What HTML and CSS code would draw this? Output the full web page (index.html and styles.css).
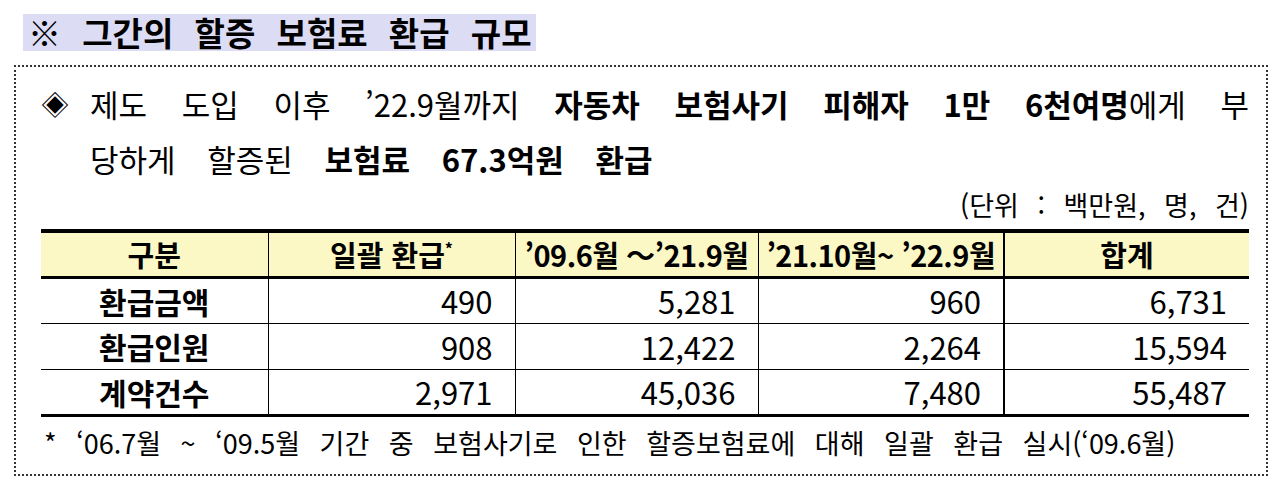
FILE: index.html
```html
<!DOCTYPE html>
<html lang="ko">
<head>
<meta charset="utf-8">
<title>그간의 할증 보험료 환급 규모</title>
<link rel="stylesheet" href="styles.css">
</head>
<body>
<h1 class="title">※ 그간의 할증 보험료 환급 규모</h1>
<section class="box">
  <div class="lead">
    <span class="bullet">◈</span>
    <div class="lead-text">
      <p class="line-first">제도 도입 이후 ’22.9월까지 <b>자동차 보험사기 피해자 1만 6천여명</b>에게 부</p>
      <p class="line">당하게 할증된 <b>보험료 67.3억원 환급</b></p>
    </div>
  </div>
  <p class="unit">(단위 : 백만원, 명, 건)</p>
  <table class="data">
    <thead>
      <tr>
        <th class="c1">구분</th>
        <th class="c2">일괄 환급<sup>*</sup></th>
        <th class="c3">’09.6월 ～’21.9월</th>
        <th class="c4">’21.10월~ ’22.9월</th>
        <th class="c5">합계</th>
      </tr>
    </thead>
    <tbody>
      <tr>
        <th class="c1">환급금액</th>
        <td class="c2">490</td>
        <td class="c3">5,281</td>
        <td class="c4">960</td>
        <td class="c5">6,731</td>
      </tr>
      <tr>
        <th class="c1">환급인원</th>
        <td class="c2">908</td>
        <td class="c3">12,422</td>
        <td class="c4">2,264</td>
        <td class="c5">15,594</td>
      </tr>
      <tr>
        <th class="c1">계약건수</th>
        <td class="c2">2,971</td>
        <td class="c3">45,036</td>
        <td class="c4">7,480</td>
        <td class="c5">55,487</td>
      </tr>
    </tbody>
  </table>
  <p class="note">* ‘06.7월 ~ ‘09.5월 기간 중 보험사기로 인한 할증보험료에 대해 일괄 환급 실시(‘09.6월)</p>
</section>
</body>
</html>
```

FILE: styles.css
```css
* { box-sizing: border-box; }

html, body {
  margin: 0;
  padding: 0;
  background: #ffffff;
  color: #000000;
  font-family: "Noto Sans CJK KR", "Noto Sans", sans-serif;
}

.title {
  display: block;
  width: fit-content;
  margin: 14px 0 0 23px;
  height: 37px;
  padding: 0 4px 0 5px;
  background: #dcdcf5;
  font-size: 33px;
  font-weight: 700;
  line-height: 37px;
  word-spacing: 12px;
  white-space: nowrap;
}

.box {
  margin: 14px 12px 0 14px;
  border: 2px dotted #333333;
  padding: 9px 17px 13px 25px;
}

.lead {
  display: grid;
  grid-template-columns: 49px 1fr;
  font-size: 31px;
  line-height: 55px;
}

.bullet {
  font-size: 28px;
  line-height: 55px;
}

.lead-text p {
  margin: 0;
  white-space: nowrap;
  word-spacing: 23px;
}

.lead-text .line-first {
  text-align: justify;
  text-align-last: justify;
  text-justify: inter-word;
  word-spacing: 0;
}

.lead b { font-weight: 700; }

.unit {
  margin: 0;
  text-align: right;
  font-size: 27px;
  line-height: 38px;
  word-spacing: 11px;
}

.data {
  width: 100%;
  margin-top: 5px;
  border-collapse: collapse;
  table-layout: fixed;
  border-top: 4px solid #000;
  border-bottom: 3px solid #000;
}

.data th,
.data td {
  height: 46px;
  padding: 0;
  white-space: nowrap;
  border-left: 1px solid #000;
  border-bottom: 1px solid #000;
  line-height: 1;
}

.data thead th {
  background: #fbf8c6;
  font-size: 29px;
  font-weight: 700;
  text-align: center;
  border-bottom: 3px solid #000;
}

.data thead th.c3,
.data thead th.c4 {
  letter-spacing: -0.5px;
}

.data sup {
  font-size: 16px;
  vertical-align: 12px;
}

.data tbody th {
  font-size: 30px;
  font-weight: 700;
  text-align: center;
}

.data td {
  font-size: 31px;
  font-weight: 400;
  text-align: right;
  padding-right: 22px;
}

.data .c1 { width: 227px; border-left: none; }
.data .c2 { width: 247px; }
.data .c3 { width: 243px; }
.data .c4 { width: 246px; }
.data .c5 { border-left: 2px solid #000; }

.note {
  margin: 8px 0 0 3px;
  font-size: 27px;
  line-height: 36px;
  word-spacing: 12px;
  white-space: nowrap;
}
```
